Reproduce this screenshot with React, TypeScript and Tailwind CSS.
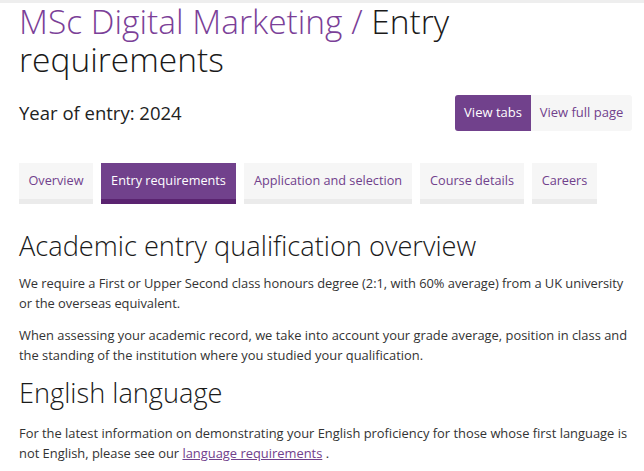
import React from "react";

const tabs: [string, string][] = [
  ["Overview", "w-[74px]"],
  ["Entry requirements", "w-[135px]"],
  ["Application and selection", "w-[168px]"],
  ["Course details", "w-[104px]"],
  ["Careers", "w-[65px]"],
];

export default function App() {
  return (
    <div
      className="w-[644px] h-[471px] overflow-hidden bg-white text-[#333]"
      style={{ fontFamily: '"Open Sans", "Noto Sans", sans-serif' }}
    >
      <div className="h-[3px] bg-[#eeeeee]" />
      <div className="px-[19px]">
        <h1 className="mt-[-1px] text-[33.5px] leading-[38px] font-light text-[#1a1a1a]">
          <span className="text-[#7b3f98]">MSc Digital Marketing / </span>
          Entry requirements
        </h1>
        <div className="mt-[17px] mr-[-7px] flex items-center justify-between">
          <div className="text-[18.5px] text-[#222]">Year of entry: 2024</div>
          <div className="flex h-[36px] rounded-[3px] overflow-hidden text-[13px]">
            <button className="w-[76px] bg-[#71418c] text-white whitespace-nowrap">View tabs</button>
            <button className="w-[101px] bg-[#f6f6f6] text-[#71418c] whitespace-nowrap">View full page</button>
          </div>
        </div>
        <div className="mt-[32px] flex gap-[8px]">
          {tabs.map(([t, w]) => {
            const active = t === "Entry requirements";
            return (
              <div
                key={t}
                className={
                  (active
                    ? "flex flex-col bg-[#71418c] text-white "
                    : "flex flex-col bg-[#f6f6f6] text-[#71418c] ") + w
                }
              >
                <div className="h-[36px] flex items-center justify-center text-[12.7px] whitespace-nowrap">{t}</div>
                <div className={active ? "h-[5px] bg-[#5a2370]" : "h-[5px] bg-[#ebebeb]"} />
              </div>
            );
          })}
        </div>
        <h2 className="mt-[24px] text-[27.2px] leading-[36px] font-light text-[#1a1a1a]">
          Academic entry qualification overview
        </h2>
        <div className="mr-[-5px]">
          <p className="mt-[10px] text-[12.9px] leading-[19.5px] tracking-[-0.05px]">
            We require a First or Upper Second class honours degree (2:1, with 60% average) from a UK university or the overseas equivalent.
          </p>
          <p className="mt-[13px] text-[12.9px] leading-[19.5px]">
            When assessing your academic record, we take into account your grade average, position in class and the standing of the institution where you studied your qualification.
          </p>
          <h2 className="mt-[10px] text-[27.2px] leading-[36px] font-light text-[#1a1a1a]">English language</h2>
          <p className="mt-[13px] text-[12.9px] leading-[19.5px]">
            For the latest information on demonstrating your English proficiency for those whose first language is not English, please see our{" "}
            <a href="#" className="text-[#71418c] underline">language requirements</a> .
          </p>
        </div>
      </div>
    </div>
  );
}
